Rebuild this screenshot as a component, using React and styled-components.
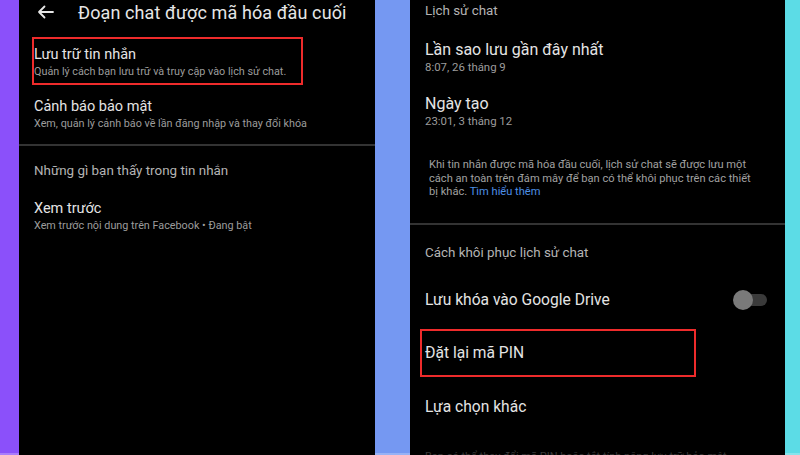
import styled, { createGlobalStyle } from 'styled-components';

const GlobalStyle = createGlobalStyle`
  html, body {
    margin: 0;
    padding: 0;
    background: #000;
  }
  body {
    font-family: Roboto, "Noto Sans", "Liberation Sans", sans-serif;
    -webkit-font-smoothing: antialiased;
  }
`;

const BackArrow = () => (
  <svg width="17" height="14" viewBox="0 0 17 14" fill="none">
    <path
      d="M16 7H2M7.5 1.5L2 7l5.5 5.5"
      stroke="#e6e6e6"
      strokeWidth="1.8"
      strokeLinecap="round"
      strokeLinejoin="round"
    />
  </svg>
);

const App = () => {
  return (
    <Page>
      <GlobalStyle />
      <Strip color="#8b50fa" width={19} />
      <Panel width={356}>
        <Header>
          <BackArrow />
          <HeaderTitle>Đoạn chat được mã hóa đầu cuối</HeaderTitle>
        </Header>
        <LeftBody>
          <Item marked top={13} boxWidth={271}>
            <Title>Lưu trữ tin nhắn</Title>
            <Sub>Quản lý cách bạn lưu trữ và truy cập vào lịch sử chat.</Sub>
          </Item>
          <Item top={4}>
            <Title>Cảnh báo bảo mật</Title>
            <Sub>Xem, quản lý cảnh báo về lần đăng nhập và thay đổi khóa</Sub>
          </Item>
        </LeftBody>
        <Divider top={7} />
        <LeftBody>
          <Section top={16}>Những gì bạn thấy trong tin nhắn</Section>
          <Item top={11}>
            <Title>Xem trước</Title>
            <Sub>Xem trước nội dung trên Facebook • Đang bật</Sub>
          </Item>
        </LeftBody>
      </Panel>
      <Strip color="#7598f2" width={35} />
      <Panel width={375}>
        <RightBody>
          <Section top={2}>Lịch sử chat</Section>
          <Item top={12}>
            <Title size={16}>Lần sao lưu gần đây nhất</Title>
            <Sub size={11.4}>8:07, 26 tháng 9</Sub>
          </Item>
          <Item top={6}>
            <Title size={16}>Ngày tạo</Title>
            <Sub size={11.4}>23:01, 3 tháng 12</Sub>
          </Item>
          <Note>
            Khi tin nhắn được mã hóa đầu cuối, lịch sử chat sẽ được lưu một
            <br />
            cách an toàn trên đám mây để bạn có thể khôi phục trên các thiết
            <br />
            bị khác. <Link>Tìm hiểu thêm</Link>
          </Note>
        </RightBody>
        <Divider top={24} />
        <RightBody>
          <Section top={19}>Cách khôi phục lịch sử chat</Section>
          <ToggleRow>
            <Title size={15.6}>Lưu khóa vào Google Drive</Title>
            <Toggle>
              <Knob />
            </Toggle>
          </ToggleRow>
          <Action marked top={20}>
            Đặt lại mã PIN
          </Action>
          <Action top={6}>Lựa chọn khác</Action>
          <Faded>Bạn có thể thay đổi mã PIN hoặc tắt tính năng lưu trữ bảo mật</Faded>
        </RightBody>
      </Panel>
      <Strip color="#5cdce6" width={15} />
    </Page>
  );
};

const Page = styled.div`
  display: flex;
  width: 800px;
  height: 455px;
  overflow: hidden;
  background: #000;
`;

const Strip = styled.div`
  flex: 0 0 ${(p) => p.width}px;
  background: ${(p) => p.color};
  border-bottom: 2px solid rgba(255, 255, 255, 0.25);
  box-sizing: border-box;
`;

const Panel = styled.div`
  flex: 0 0 ${(p) => p.width}px;
  background: #000;
  display: flex;
  flex-direction: column;
  overflow: hidden;
`;

const Header = styled.div`
  height: 24px;
  display: flex;
  align-items: center;
  padding-left: 18px;
  gap: 24px;
`;

const HeaderTitle = styled.div`
  font-size: 18px;
  color: #e6e6e6;
  white-space: nowrap;
  letter-spacing: 0.1px;
`;

const LeftBody = styled.div`
  display: flex;
  flex-direction: column;
  align-items: flex-start;
  padding-left: 15px;
`;

const RightBody = styled.div`
  display: flex;
  flex-direction: column;
  align-items: flex-start;
  padding-left: 15px;
`;

const Item = styled.div`
  margin: ${(p) => p.top || 0}px 0 0 -2px;
  border: 2px solid ${(p) => (p.marked ? '#ee2b2b' : 'transparent')};
  width: ${(p) => (p.boxWidth ? `${p.boxWidth - 4}px` : 'auto')};
  padding: 7px 0 4px 0;
  display: flex;
  flex-direction: column;
`;

const Title = styled.div`
  font-size: ${(p) => p.size || 14.5}px;
  line-height: 18px;
  color: #e4e4e4;
  white-space: nowrap;
`;

const Sub = styled.div`
  font-size: ${(p) => p.size || 10.8}px;
  line-height: 14px;
  color: #9c9c9c;
  margin-top: 1px;
  white-space: nowrap;
`;

const Section = styled.div`
  margin-top: ${(p) => p.top || 0}px;
  font-size: 13.4px;
  line-height: 18px;
  color: #b4b4b4;
  white-space: nowrap;
`;

const Divider = styled.div`
  margin-top: ${(p) => p.top || 0}px;
  height: 2px;
  background: #333;
  flex-shrink: 0;
`;

const Note = styled.p`
  margin: 24px 0 0 4px;
  font-size: 11.1px;
  line-height: 13.5px;
  color: #a0a0a0;
  white-space: nowrap;
`;

const Link = styled.span`
  color: #4d8fe6;
`;

const ToggleRow = styled.div`
  display: flex;
  align-items: center;
  justify-content: space-between;
  width: 342px;
  margin-top: 29px;
  height: 18px;
`;

const Toggle = styled.div`
  position: relative;
  width: 32px;
  height: 12px;
  border-radius: 6px;
  background: #3a3a3a;
`;

const Knob = styled.div`
  position: absolute;
  left: -2px;
  top: -4px;
  width: 20px;
  height: 20px;
  border-radius: 50%;
  background: #7a7a7a;
`;

const Action = styled.div`
  margin: ${(p) => p.top || 0}px 0 0 -5px;
  width: 269px;
  height: 44px;
  border: 2px solid ${(p) => (p.marked ? '#ee2b2b' : 'transparent')};
  padding-left: 3px;
  display: flex;
  align-items: center;
  font-size: 15.6px;
  color: #e4e4e4;
  white-space: nowrap;
`;

const Faded = styled.div`
  margin-top: 19px;
  font-size: 11px;
  color: #8a8a8a;
  opacity: 0.4;
  white-space: nowrap;
`;

export default App;
